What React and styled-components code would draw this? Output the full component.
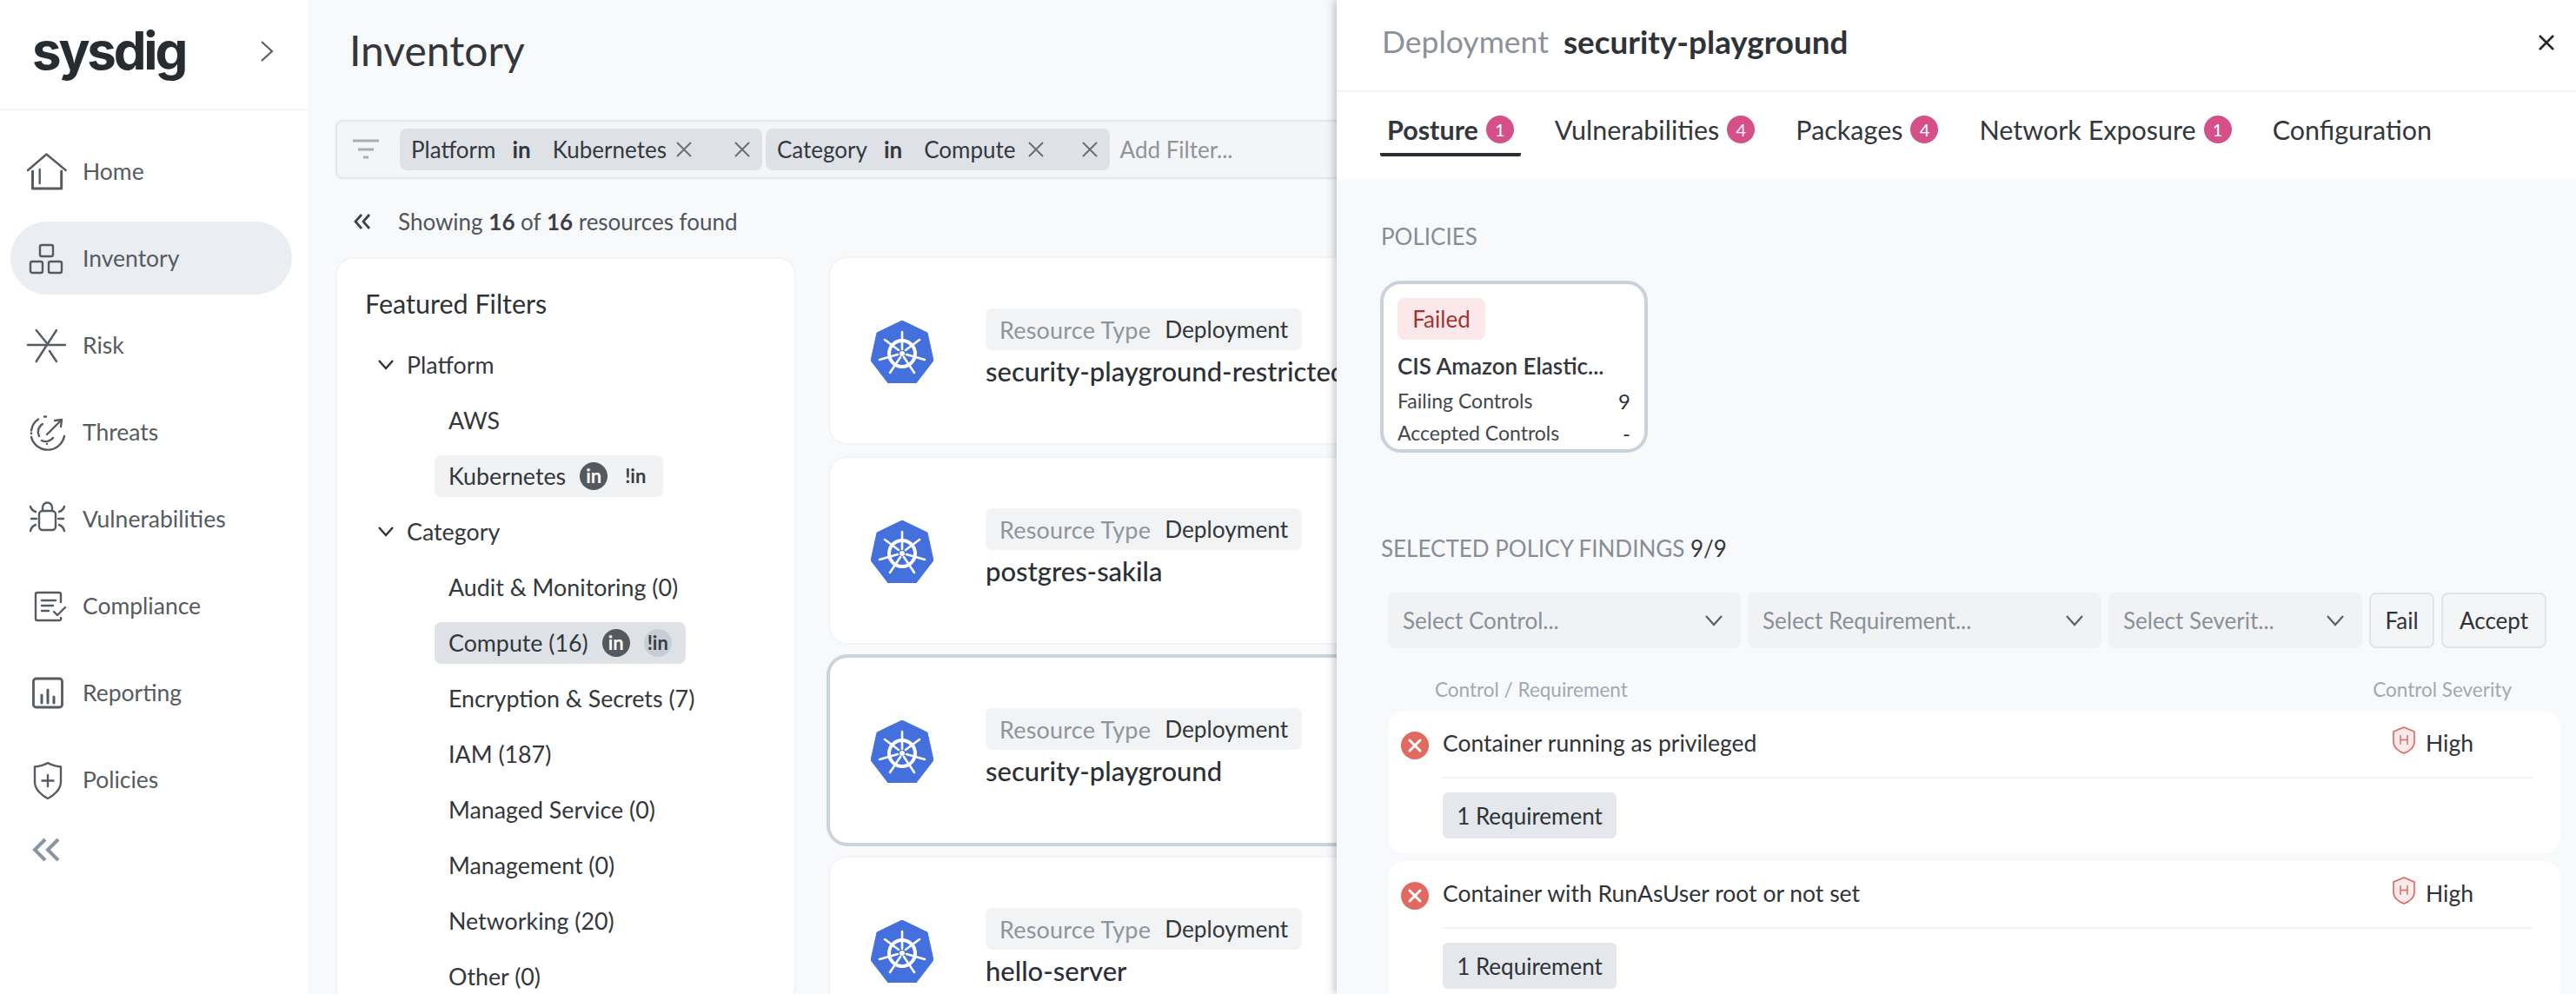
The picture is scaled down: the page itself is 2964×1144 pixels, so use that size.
import React from "react";
import styled, { createGlobalStyle } from "styled-components";

const FONT = '"Lato", "Liberation Sans", sans-serif';

const Global = createGlobalStyle`
  html, body { margin: 0; padding: 0; background: #f8f9fb; }
  * { box-sizing: border-box; }
  body { font-family: ${FONT}; color: #2c3036; }
`;

const Page = styled.div`
  position: relative; width: 2964px; height: 1144px; overflow: hidden;
  display: flex; background: #f8f9fb;
`;

/* sidebar */
const Sidebar = styled.aside`
  width: 354px; flex: none; height: 100%; background: #fff; display: flex; flex-direction: column;
`;
const SideHead = styled.div`
  height: 127px; border-bottom: 2px solid #f5f6f7; padding: 0 38px 8px; flex: none;
  display: flex; align-items: center; justify-content: space-between;
`;
const Logo = styled.div`
  font-family: "Inter", sans-serif; font-weight: 700; font-size: 60px; line-height: 70px;
  letter-spacing: -3.2px; color: #272c30; margin: -2px 0 0 -1px;
`;
const Nav = styled.nav`
  padding: 28px 18px 0 12px; display: flex; flex-direction: column; gap: 16px;
`;
const NavItem = styled.div`
  height: 84px; border-radius: 42px; display: flex; align-items: center; padding-left: 18px;
  gap: 17px; font-size: 26.5px; color: #565b62; background: ${p => (p.$active ? "#eaedf2" : "transparent")};
`;
const NavSvg = styled.svg`
  width: 48px; height: 48px; flex: none; fill: none; stroke: #565b62; stroke-width: 2.4;
  stroke-linecap: round; stroke-linejoin: round;
`;
const Collapse = styled.svg`
  margin: 25px 0 0 37px; width: 32px; height: 28px; fill: none; stroke: #8a95a2; stroke-width: 4;
`;

/* main */
const Main = styled.main`
  width: 2610px; flex: none; height: 100%; display: flex; flex-direction: column;
`;
const TitleRow = styled.div`
  height: 138px; flex: none; padding: 0 0 22px 48px; display: flex; align-items: center;
`;
const Title = styled.h1`
  margin: 0; font-size: 48px; font-weight: 400; line-height: 60px; color: #33373c;
`;
const FilterBar = styled.div`
  height: 68px; flex: none; margin-left: 32px; border: 2px solid #e3e7ec; border-radius: 8px;
  background: #f4f5f7; display: flex; align-items: center; gap: 4px; padding-left: 17px;
`;
const FilterGlyph = styled.svg`
  width: 32px; height: 26px; flex: none; margin-right: 19px; stroke: #a8adb4; stroke-width: 3; fill: none;
`;
const FilterChip = styled.div`
  height: 48px; display: flex; align-items: center; background: #dee2e7; border-radius: 8px;
  padding: 0 13px; font-size: 26px; color: #34383e; white-space: nowrap;
`;
const Op = styled.b`
  font-weight: 700; margin: 0 25px 0 19px;
`;
const ChipX = styled.svg`
  width: 20px; height: 20px; margin-left: ${p => p.$ml}px; stroke: #6a6f76; stroke-width: 2; fill: none; flex: none;
`;
const AddFilter = styled.span`
  font-size: 26px; color: #8e949c; margin-left: 8px;
`;
const ResultRow = styled.div`
  height: 92px; flex: none; padding: 6px 0 0 53px; display: flex; align-items: center; gap: 31px;
  font-size: 26px; color: #50555b;
  b { font-weight: 700; color: #3d4147; }
`;
const SmallDouble = styled.svg`
  width: 20px; height: 18px; fill: none; stroke: #3e4349; stroke-width: 2.8;
`;
const Content = styled.div`
  display: flex; gap: 39px; margin-left: 32px; flex: none;
`;
const FilterCard = styled.section`
  width: 530px; flex: none; height: 860px; margin-top: -2px; background: #fff; border-radius: 20px;
  border: 2px solid #f3f4f6; padding: 0 0 0 33px;
`;
const CardTitle = styled.h2`
  margin: 0 0 0 -1px; height: 90px; padding-top: 33px; font-size: 30.500px; line-height: 36px; font-weight: 400; color: #2e3237;
`;
const GroupRow = styled.div`
  height: 64px; display: flex; align-items: center; gap: 14px; font-size: 26.800px; color: #33373c;
`;
const ChevSmall = styled.svg`
  margin-left: 13px; width: 20px; height: 14px; fill: none; stroke: #2f3338; stroke-width: 2.4;
`;
const OptionRow = styled.div`
  height: 64px; display: flex; align-items: center; padding-left: 79px; font-size: 26.800px; color: #33373c;
`;
const OptionChip = styled.div`
  height: 48px; display: flex; align-items: center; border-radius: 8px; padding: 0 16px;
  background: ${p => p.$bg}; white-space: nowrap;
`;
const Pill = styled.span`
  width: 32px; height: 32px; border-radius: 50%; display: flex; align-items: center; justify-content: center;
  font-size: 22px; line-height: 32px; margin-left: 16px; font-weight: 700;
  background: ${p => (p.$on ? "#54585f" : p.$soft ? "#c7cdd6" : "transparent")};
  color: ${p => (p.$on ? "#fff" : "#3a3e44")};
`;
const ResourceList = styled.div`
  width: 1200px; margin-top: -1px; display: flex; flex-direction: column; gap: 17px;
`;
const ResourceCard = styled.article`
  height: 213px; background: #fff; border-radius: 20px; display: flex; align-items: center;
  padding: 0 0 0 47px; gap: 60px;
  box-shadow: ${p => (p.$selected ? "0 0 0 4px #cbd3dc" : "0 0 0 2px #f3f4f6")};
`;
const KubeSvg = styled.svg`
  width: 72px; height: 72px; flex: none; margin-top: 3px;
`;
const ResourceBody = styled.div`
  display: flex; flex-direction: column; align-items: flex-start; gap: 2px; margin-top: -3px;
`;
const TypeTag = styled.div`
  height: 48px; display: flex; align-items: center; gap: 16px; background: #f2f3f5; border-radius: 8px;
  padding: 0 16px; font-size: 26.300px; color: #33373c;
`;
const Muted = styled.span`
  color: #8f959d; font-size: 27px; letter-spacing: .2px;
`;
const ResourceName = styled.div`
  font-size: 31px; line-height: 44px; color: #2c3036; white-space: nowrap; font-weight: 500;
`;

/* drawer */
const Drawer = styled.aside`
  position: absolute; top: 0; left: 1538px; width: 1426px; height: 1144px; background: #f8f9fb;
  box-shadow: -3px 0 9px rgba(40, 46, 56, .28); display: flex; flex-direction: column;
`;
const DrawerHead = styled.header`
  height: 106px; flex: none; background: #fff; border-bottom: 2px solid #f2f3f5; padding: 0 24px 9px 52px;
  display: flex; align-items: center; gap: 17px;
`;
const HeadKind = styled.span`
  color: #8b929b; font-size: 35.500px;
`;
const HeadName = styled.strong`
  font-weight: 700; color: #2f3338; flex: 1; font-size: 36.800px;
`;
const CloseSvg = styled.svg`
  width: 20px; height: 20px; stroke: #24282c; stroke-width: 2.6; fill: none; margin-top: 3px;
`;
const Tabs = styled.div`
  height: 100px; flex: none; background: #fff; display: flex; gap: 31px; padding-left: 50px;
`;
const Tab = styled.div`
  height: 74px; padding: 16px 8px 0; display: flex; align-items: center; gap: 9px; font-size: 30.500px;
  color: #33373c; font-weight: ${p => (p.$active ? 700 : 400)};
  border-bottom: 4px solid ${p => (p.$active ? "#2c2f33" : "transparent")}; border-radius: 2px;
  white-space: nowrap;
`;
const Badge = styled.span`
  width: 32px; height: 32px; border-radius: 50%; background: #d54f89; color: #fff; font-size: 20px;
  display: flex; align-items: center; justify-content: center; font-weight: 400; flex: none;
`;
const DrawerBody = styled.div`
  flex: 1; padding: 0 18px 0 52px; display: flex; flex-direction: column; min-height: 0;
`;
const SectionLabel = styled.div`
  font-size: 26px; line-height: 32px; color: #868d96; margin: ${p => p.$mt}px 0 0 -1px;
  span { color: #33373c; }
`;
const PolicyCard = styled.div`
  width: 308px; height: 212px; margin: 35px 0 0 -2px; background: #fff; border: 4px solid #c9d2dc; border-radius: 24px;
  padding: 16px 16px 0;
  display: flex; flex-direction: column;
`;
const FailTag = styled.div`
  align-self: flex-start; height: 48px; width: 101px; display: flex; align-items: center; justify-content: center;
  background: #fce8ea; border-radius: 8px; font-size: 26px; color: #a23232;
`;
const PolicyName = styled.div`
  margin-top: 12px; font-size: 26px; line-height: 36px; font-weight: 600; color: #33373c; white-space: nowrap;
`;
const PolicyStat = styled.div`
  display: flex; justify-content: space-between; font-size: 23px; line-height: 37px; color: #42464c;
  margin-top: ${p => p.$mt || 0}px;
  b { font-weight: 400; color: #2e3237; font-size: 24px; }
`;
const Controls = styled.div`
  display: flex; gap: 8px; margin: 35px 0 0 7px; height: 64px;
`;
const SelectBox = styled.div`
  width: ${p => p.$w}px; height: 64px; background: #f1f2f4; border-radius: 8px; display: flex; align-items: center;
  justify-content: space-between; padding: 0 20px 0 17px; font-size: 26px; color: #8a9098; flex: none; white-space: nowrap;
`;
const Chev = styled.svg`
  width: 22px; height: 14px; fill: none; stroke: #5c6168; stroke-width: 2.2;
`;
const GhostBtn = styled.div`
  width: ${p => p.$w}px; height: 64px; border: 2px solid #dfe4ea; border-radius: 8px; background: #f4f5f7;
  display: flex; align-items: center; justify-content: center; font-size: 26px; color: #2f3338; flex: none;
`;
const ColHead = styled.div`
  display: flex; justify-content: space-between; padding: 22px 56px 0 61px; height: 72px; align-items: center;
  font-size: 22.500px; color: #a3a8af; flex: none;
`;
const Finding = styled.div`
  margin: 0 0 9px 7px; height: 164px; flex: none; background: #fff; border-radius: 20px; padding: 0 32px 0 63px;
  display: flex; flex-direction: column;
`;
const FindingTop = styled.div`
  position: relative; height: 78px; flex: none; border-bottom: 2px solid #f2f3f5; display: flex; align-items: center;
  justify-content: space-between; font-size: 26.500px; color: #2f3338; padding-bottom: 2px;
`;
const FailIcon = styled.svg`
  position: absolute; left: -48px; top: 24px; width: 32px; height: 32px;
`;
const Severity = styled.div`
  display: flex; align-items: center; gap: 12px; margin-right: 68px; font-size: 26.500px;
`;
const Shield = styled.svg`
  width: 26px; height: 32px; margin-top: -6px;
`;
const ReqChip = styled.div`
  margin-top: 16px; width: 200px; height: 53px; background: #e4e7eb; border-radius: 6px; display: flex;
  align-items: center; justify-content: center; font-size: 26px; color: #2f3338;
`;

const Icon = ({ children }) => <NavSvg viewBox="0 0 48 48">{children}</NavSvg>;

const navItems = [
  ["Home", <><path d="M2 23 23.5 4.5 45.7 23" /><path d="M7.500 24V44H40.700V24" strokeWidth="3" /><path d="M15.700 22V38" /></>],
  ["Inventory", <><rect x="16" y="9" width="15" height="13" rx="2" /><rect x="5" y="28" width="14" height="13" rx="2" /><rect x="26" y="28" width="15" height="13" rx="2" /></>, true],
  ["Risk", <><path d="M2 24H45" /><path d="M35 7 11.700 43" /><path d="M11.700 7 24 22" /><path d="M27 31 35 43" /></>],
  ["Threats", <><path d="M14 9.500a19 19 0 0 0-8 13" /><path d="M21 6.500h2" /><path d="M6 30a19.500 19.500 0 0 0 38-1" /><path d="M6 25.500v.5" /><path d="M19 15a10.500 10.500 0 0 0-4 14" /><path d="M18 34a10.500 10.500 0 0 0 13-3" /><path d="M24 27 41 10" /><path d="M33 11l8-1-1 8" /><path d="M24 38v.1" /></>],
  ["Vulnerabilities", <><rect x="15" y="15" width="19" height="22" rx="4" /><path d="M19 15V11a5.500 5.500 0 0 1 11 0V15" /><path d="M5 10c1 3 3 5 6 6" /><path d="M6 24h6" /><path d="M5 38c1-4 3-6 6-7" /><path d="M44 10c-1 3-3 5-6 6" /><path d="M43 24h-6" /><path d="M44 38c-1-4-3-6-6-7" /></>],
  ["Compliance", <><path d="M40 20V11a2 2 0 0 0-2-2H13a2 2 0 0 0-2 2V39a2 2 0 0 0 2 2H38a2 2 0 0 0 2-3" /><path d="M18 18H34M18 24H31M18 30H26" /><path d="M32 31l4 4 9-9" /></>],
  ["Reporting", <><rect x="8.500" y="8" width="33" height="33" rx="3" strokeWidth="2.800" /><path d="M18 27V36M25 21V36M32 29V36" strokeWidth="3" /></>],
  ["Policies", <><path d="M25 5C20 8 15 9 10 9.500V27C10 36 19 43 25 46 31 43 40 36 40 27V9.500C35 9 30 8 25 5Z" /><path d="M25 19V32M18.500 25.500H31.500" /></>],
];

const Kube = () => (
  <KubeSvg viewBox="0 0 72 72">
    <path d="M36 0 65 14 72 46 52 72H20L0 46 7 14Z" fill="#4470de" stroke="#4470de" strokeWidth="1" strokeLinejoin="round" />
    <g fill="none" stroke="#fff" strokeLinecap="round">
      <circle cx="36" cy="38" r="15" strokeWidth="4" />
      <path d="M36 13V33M16 22 32 34M10 45 31 39M22 60 34 42M50 60 38 42M62 45 41 39M56 22 40 34" strokeWidth="2.600" />
    </g>
    <circle cx="36" cy="38" r="3" fill="#fff" />
  </KubeSvg>
);

const X = ({ ml }) => (
  <ChipX $ml={ml} viewBox="0 0 20 20"><path d="M2 2 18 18M18 2 2 18" /></ChipX>
);

const ChipBlock = ({ field, value, firstX, gapX }) => (
  <FilterChip>
    {field}<Op>in</Op>{value}
    <X ml={firstX} />
    <X ml={gapX} />
  </FilterChip>
);

const Down = () => <Chev viewBox="0 0 22 14"><path d="M2 2 11 12 20 2" /></Chev>;

const FindingRow = ({ name }) => (
  <Finding>
    <FindingTop>
      <FailIcon viewBox="0 0 32 32">
        <circle cx="16" cy="16" r="16" fill="#e2695f" />
        <path d="M10 10 22 22M22 10 10 22" stroke="#fff" strokeWidth="3" strokeLinecap="round" />
      </FailIcon>
      <span>{name}</span>
      <Severity>
        <Shield viewBox="0 0 26 32">
          <path d="M13 1 25 6V18C25 24 19 29 13 31 7 29 1 24 1 18V6Z" fill="#fcebec" stroke="#e2645c" strokeWidth="1.600" strokeLinejoin="round" />
          <path d="M9 10V21M17 10V21M9 15.500H17" stroke="#e2645c" strokeWidth="1.400" fill="none" />
        </Shield>
        High
      </Severity>
    </FindingTop>
    <ReqChip>1 Requirement</ReqChip>
  </Finding>
);

export default function App() {
  return (
    <Page>
      <Global />
      <Sidebar>
        <SideHead>
          <Logo>sysdig</Logo>
          <svg width="18" height="26" viewBox="0 0 18 26" fill="none" stroke="#5b6066" strokeWidth="2.200"><path d="M3 2 15 13 3 24" /></svg>
        </SideHead>
        <Nav>
          {navItems.map(([label, art, active]) => (
            <NavItem key={label} $active={active}><Icon>{art}</Icon>{label}</NavItem>
          ))}
        </Nav>
        <Collapse viewBox="0 0 32 28"><path d="M15 2 3 14 15 26M30 2 18 14 30 26" /></Collapse>
      </Sidebar>

      <Main>
        <TitleRow><Title>Inventory</Title></TitleRow>
        <FilterBar>
          <FilterGlyph viewBox="0 0 32 26"><path d="M1 3H31M7 13H25M13 22H19" /></FilterGlyph>
          <ChipBlock field="Platform" value="Kubernetes" firstX={10} gapX={47} />
          <ChipBlock field="Category" value="Compute" firstX={13} gapX={42} />
          <AddFilter>Add Filter...</AddFilter>
        </FilterBar>
        <ResultRow>
          <SmallDouble viewBox="0 0 20 18"><path d="M9 1 2 9 9 17M18 1 11 9 18 17" /></SmallDouble>
          <span>Showing <b>16</b> of <b>16</b> resources found</span>
        </ResultRow>
        <Content>
          <FilterCard>
            <CardTitle>Featured Filters</CardTitle>
            <GroupRow><ChevSmall viewBox="0 0 20 14"><path d="M2 2 10 11 18 2" /></ChevSmall>Platform</GroupRow>
            <OptionRow><OptionChip>AWS</OptionChip></OptionRow>
            <OptionRow>
              <OptionChip $bg="#f1f2f4">Kubernetes<Pill $on>in</Pill><Pill>!in</Pill></OptionChip>
            </OptionRow>
            <GroupRow><ChevSmall viewBox="0 0 20 14"><path d="M2 2 10 11 18 2" /></ChevSmall>Category</GroupRow>
            <OptionRow><OptionChip>Audit &amp; Monitoring (0)</OptionChip></OptionRow>
            <OptionRow>
              <OptionChip $bg="#dee2e7">Compute (16)<Pill $on>in</Pill><Pill $soft>!in</Pill></OptionChip>
            </OptionRow>
            <OptionRow><OptionChip>Encryption &amp; Secrets (7)</OptionChip></OptionRow>
            <OptionRow><OptionChip>IAM (187)</OptionChip></OptionRow>
            <OptionRow><OptionChip>Managed Service (0)</OptionChip></OptionRow>
            <OptionRow><OptionChip>Management (0)</OptionChip></OptionRow>
            <OptionRow><OptionChip>Networking (20)</OptionChip></OptionRow>
            <OptionRow><OptionChip>Other (0)</OptionChip></OptionRow>
          </FilterCard>
          <ResourceList>
            {["security-playground-restricted", "postgres-sakila", "security-playground", "hello-server"].map((n, i) => (
              <ResourceCard key={n} $selected={i === 2}>
                <Kube />
                <ResourceBody>
                  <TypeTag><Muted>Resource Type</Muted>Deployment</TypeTag>
                  <ResourceName>{n}</ResourceName>
                </ResourceBody>
              </ResourceCard>
            ))}
          </ResourceList>
        </Content>
      </Main>

      <Drawer>
        <DrawerHead>
          <HeadKind>Deployment</HeadKind>
          <HeadName>security-playground</HeadName>
          <CloseSvg viewBox="0 0 20 20"><path d="M2 2 18 18M18 2 2 18" /></CloseSvg>
        </DrawerHead>
        <Tabs>
          <Tab $active>Posture<Badge>1</Badge></Tab>
          <Tab>Vulnerabilities<Badge>4</Badge></Tab>
          <Tab>Packages<Badge>4</Badge></Tab>
          <Tab>Network Exposure<Badge>1</Badge></Tab>
          <Tab>Configuration</Tab>
        </Tabs>
        <DrawerBody>
          <SectionLabel $mt={50}>POLICIES</SectionLabel>
          <PolicyCard>
            <FailTag>Failed</FailTag>
            <PolicyName>CIS Amazon Elastic...</PolicyName>
            <PolicyStat $mt={4}><span>Failing Controls</span><b>9</b></PolicyStat>
            <PolicyStat><span>Accepted Controls</span><b>-</b></PolicyStat>
          </PolicyCard>
          <SectionLabel $mt={94}>SELECTED POLICY FINDINGS <span>9/9</span></SectionLabel>
          <Controls>
            <SelectBox $w={406}>Select Control...<Down /></SelectBox>
            <SelectBox $w={407}>Select Requirement...<Down /></SelectBox>
            <SelectBox $w={292}>Select Severit...<Down /></SelectBox>
            <GhostBtn $w={75}>Fail</GhostBtn>
            <GhostBtn $w={121}>Accept</GhostBtn>
          </Controls>
          <ColHead><span>Control / Requirement</span><span>Control Severity</span></ColHead>
          <FindingRow name="Container running as privileged" />
          <FindingRow name="Container with RunAsUser root or not set" />
        </DrawerBody>
      </Drawer>
    </Page>
  );
}
